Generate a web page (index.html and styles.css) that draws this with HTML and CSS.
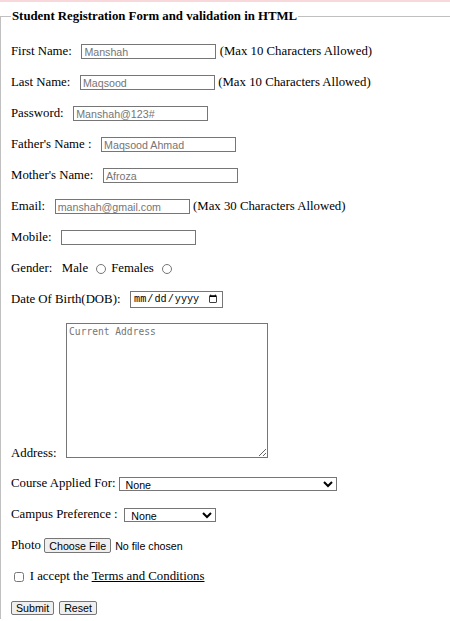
FILE: index.html
```html
<!DOCTYPE html>
<html>
<head>
<meta charset="utf-8">
<title>Student Registration Form</title>
<link rel="stylesheet" href="styles.css">
</head>
<body>
<div class="topbar"></div>
<fieldset class="box">
  <legend class="title">Student Registration Form and validation in HTML</legend>
  <form class="form">
    <div class="row">
      <span class="lbl">First Name:</span>
      <input class="txt gap" type="text" placeholder="Manshah">
      <span class="note">(Max 10 Characters Allowed)</span>
    </div>
    <div class="row">
      <span class="lbl">Last Name:</span>
      <input class="txt gap" type="text" placeholder="Maqsood">
      <span class="note">(Max 10 Characters Allowed)</span>
    </div>
    <div class="row">
      <span class="lbl">Password:</span>
      <input class="txt gap" type="text" placeholder="Manshah@123#">
    </div>
    <div class="row">
      <span class="lbl">Father's Name :</span>
      <input class="txt gap" type="text" placeholder="Maqsood Ahmad">
    </div>
    <div class="row">
      <span class="lbl">Mother's Name:</span>
      <input class="txt gap" type="text" placeholder="Afroza">
    </div>
    <div class="row">
      <span class="lbl">Email:</span>
      <input class="txt gap" type="text" placeholder="manshah@gmail.com">
      <span class="note">(Max 30 Characters Allowed)</span>
    </div>
    <div class="row">
      <span class="lbl">Mobile:</span>
      <input class="txt gap" type="text">
    </div>
    <div class="row">
      <span class="lbl">Gender:</span>
      <span class="lbl gap">Male</span>
      <input class="radio r1" type="radio" name="g">
      <span class="lbl">Females</span>
      <input class="radio r2" type="radio" name="g">
    </div>
    <div class="row">
      <span class="lbl">Date Of Birth(DOB):</span>
      <input class="date gap" type="date">
    </div>
    <div class="row addr">
      <span class="lbl addr-lbl">Address:</span>
      <textarea class="area gap" placeholder="Current Address"></textarea>
    </div>
    <div class="row">
      <span class="lbl">Course Applied For:</span>
      <select class="sel course">
        <option>None</option>
      </select>
    </div>
    <div class="row">
      <span class="lbl">Campus Preference :</span>
      <select class="sel campus">
        <option>None</option>
      </select>
    </div>
    <div class="row">
      <span class="lbl">Photo</span>
      <input class="file" type="file">
    </div>
    <div class="row">
      <input class="check" type="checkbox">
      <span class="lbl">I accept the <a class="link" href="#">Terms and Conditions</a></span>
    </div>
    <div class="row last">
      <button class="btn" type="submit">Submit</button>
      <button class="btn reset" type="reset">Reset</button>
    </div>
  </form>
</fieldset>
</body>
</html>
```
FILE: styles.css
```css
html, body {
  margin: 0;
  padding: 0;
  background: #ffffff;
}
body {
  font-family: "Liberation Serif", "Times New Roman", serif;
  font-size: 12.8px;
  color: #000;
  height: 621px;
  overflow: hidden;
}
.topbar {
  height: 2px;
  background: #f9d8dc;
}
.box {
  margin: 7px 0 0 0;
  padding: 12px 0 0 10px;
  border: 1px solid #c0c0c0;
  border-right: none;
  border-bottom: none;
  min-width: 0;
}
.title {
  font-weight: bold;
  font-size: 12.8px;
  line-height: 15px;
  padding: 0 1px;
  margin-left: 0;
}
.form {
  display: flex;
  flex-direction: column;
  margin: 0;
}
.row {
  display: flex;
  align-items: center;
  height: 31px;
  white-space: pre;
}
.last {
  height: 27px;
  align-items: flex-start;
  padding-top: 9px;
  box-sizing: border-box;
}
.lbl {
  line-height: 15px;
}
.gap {
  margin-left: 9.6px;
}
.note {
  margin-left: 3.3px;
  line-height: 15px;
}
.txt {
  box-sizing: border-box;
  width: 135px;
  height: 15px;
  border: 1px solid #767676;
  padding: 0 2px;
  font-family: "Liberation Sans", Arial, sans-serif;
  font-size: 10.67px;
  color: #000;
  background: #fff;
  outline: none;
  margin-top: 0;
  margin-bottom: 0;
}
.txt::placeholder,
.area::placeholder {
  color: #757575;
}
.radio {
  width: 10px;
  height: 10px;
  margin: 0;
}
.r1 {
  margin-left: 7.4px;
  margin-right: 5.7px;
}
.r2 {
  margin-left: 7.7px;
}
.date {
  box-sizing: border-box;
  width: 93px;
  height: 17px;
  border: 1px solid #767676;
  padding: 0 2px;
  font-family: "Liberation Mono", "DejaVu Sans Mono", monospace;
  font-size: 10.2px;
  margin-top: 0;
  margin-bottom: 0;
}
.addr {
  height: 153px;
  box-sizing: border-box;
  padding-top: 8px;
  padding-bottom: 10px;
  align-items: flex-end;
}
.addr-lbl {
  margin-bottom: -3.2px;
}
.area {
  box-sizing: border-box;
  width: 202px;
  height: 135px;
  border: 1px solid #767676;
  padding: 2px;
  margin-top: 0;
  margin-bottom: 0;
  font-family: "DejaVu Sans Mono", "Liberation Mono", monospace;
  font-size: 9.6px;
  resize: both;
}
.sel {
  box-sizing: border-box;
  height: 14px;
  border: 1px solid #767676;
  border-radius: 0;
  padding: 0 0 0 2px;
  font-family: "Liberation Sans", Arial, sans-serif;
  font-size: 10.67px;
  background-color: #fff;
  color: #000;
  margin-top: 0;
  margin-bottom: 0;
}
.course {
  width: 218px;
  margin-left: 3px;
}
.campus {
  width: 92px;
  margin-left: 6.7px;
}
.file {
  margin: 0 0 0 3.4px;
  font-family: "Liberation Sans", Arial, sans-serif;
  font-size: 10.67px;
  color: #000;
}
.file::file-selector-button {
  box-sizing: border-box;
  height: 15px;
  padding: 0 4px;
  margin: 0 4px 0 0;
  border: 1px solid #767676;
  border-radius: 2px;
  background: #efefef;
  font-family: "Liberation Sans", Arial, sans-serif;
  font-size: 10.67px;
  color: #000;
}
.check {
  width: 10px;
  height: 10px;
  margin: 0 5.7px 0 3px;
}
.link {
  color: #000;
  text-decoration: underline;
}
.btn {
  box-sizing: border-box;
  height: 14px;
  padding: 0 4px;
  margin: 0;
  border: 1px solid #767676;
  border-radius: 2px;
  background: #efefef;
  font-family: "Liberation Sans", Arial, sans-serif;
  font-size: 10.67px;
  line-height: 12px;
  color: #000;
}
.reset {
  margin-left: 5px;
}
```
